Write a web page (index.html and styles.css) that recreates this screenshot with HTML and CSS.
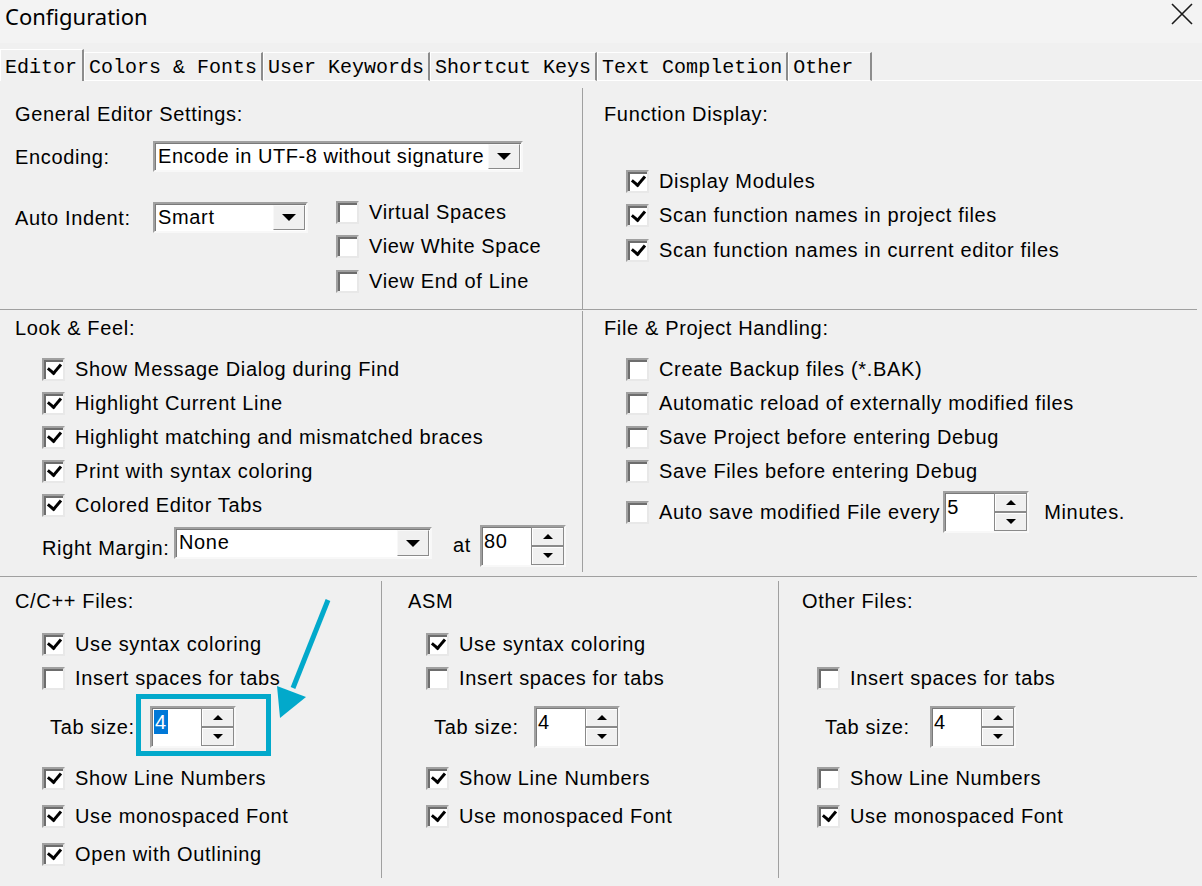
FILE: index.html
```html
<!DOCTYPE html>
<html>
<head>
<meta charset="utf-8">
<title>Configuration</title>
<link rel="stylesheet" href="styles.css">
</head>
<body>
<div class="window">
  <div class="titlebar">
    <span class="title">Configuration</span>
    <svg class="close" width="22" height="22" viewBox="0 0 22 22"><path d="M1 1 L21 21 M21 1 L1 21" stroke="#1a1a1a" stroke-width="1.6" fill="none"/></svg>
  </div>

  <div class="tabs">
    <div class="tab sel">Editor</div>
    <div class="tab">Colors &amp; Fonts</div>
    <div class="tab">User Keywords</div>
    <div class="tab">Shortcut Keys</div>
    <div class="tab">Text Completion</div>
    <div class="tab last">Other</div>
    <div class="tab-fill"></div>
  </div>

  <div class="panel">
    <!-- top section -->
    <div class="sec sec-top">
      <div class="cell cell-gen">
        <div class="heading">General Editor Settings:</div>
        <div class="enc-row">
          <span class="lbl lbl-field">Encoding:</span>
          <div class="combo combo-enc"><span class="combo-text">Encode in UTF-8 without signature</span><span class="combo-btn"><i class="tri-down"></i></span></div>
        </div>
        <div class="indent-row">
          <div class="indent-field">
            <span class="lbl lbl-field">Auto Indent:</span>
            <div class="combo combo-smart"><span class="combo-text">Smart</span><span class="combo-btn"><i class="tri-down"></i></span></div>
          </div>
          <div class="checks checks-view">
            <div class="cb cb-view"><span class="box"></span><span>Virtual Spaces</span></div>
            <div class="cb cb-view"><span class="box"></span><span>View White Space</span></div>
            <div class="cb cb-view"><span class="box"></span><span>View End of Line</span></div>
          </div>
        </div>
      </div>
      <div class="vline vline-top"></div>
      <div class="cell cell-right cell-func">
        <div class="heading">Function Display:</div>
        <div class="checks checks-func">
          <div class="cb cb-view"><span class="box on"></span><span>Display Modules</span></div>
          <div class="cb cb-view"><span class="box on"></span><span>Scan function names in project files</span></div>
          <div class="cb cb-view"><span class="box on"></span><span>Scan function names in current editor files</span></div>
        </div>
      </div>
    </div>

    <!-- middle section -->
    <div class="sec sec-mid">
      <div class="cell cell-look">
        <div class="heading">Look &amp; Feel:</div>
        <div class="checks checks-look">
          <div class="cb"><span class="box on"></span><span>Show Message Dialog during Find</span></div>
          <div class="cb"><span class="box on"></span><span>Highlight Current Line</span></div>
          <div class="cb"><span class="box on"></span><span>Highlight matching and mismatched braces</span></div>
          <div class="cb"><span class="box on"></span><span>Print with syntax coloring</span></div>
          <div class="cb"><span class="box on"></span><span>Colored Editor Tabs</span></div>
        </div>
        <div class="margin-row">
          <span class="lbl lbl-margin">Right Margin:</span>
          <div class="combo combo-margin"><span class="combo-text">None</span><span class="combo-btn"><i class="tri-down"></i></span></div>
          <span class="lbl lbl-at">at</span>
          <div class="spin"><span class="spin-val">80</span><span class="spin-btns"><span class="sb"><i class="tri-up"></i></span><span class="sb"><i class="tri-dn"></i></span></span></div>
        </div>
      </div>
      <div class="vline vline-mid"></div>
      <div class="cell cell-right cell-file">
        <div class="heading">File &amp; Project Handling:</div>
        <div class="checks checks-file">
          <div class="cb"><span class="box"></span><span>Create Backup files (*.BAK)</span></div>
          <div class="cb"><span class="box"></span><span>Automatic reload of externally modified files</span></div>
          <div class="cb"><span class="box"></span><span>Save Project before entering Debug</span></div>
          <div class="cb"><span class="box"></span><span>Save Files before entering Debug</span></div>
          <div class="cb cb-auto"><span class="box"></span><span>Auto save modified File every</span>
            <div class="spin spin-auto"><span class="spin-val">5</span><span class="spin-btns"><span class="sb"><i class="tri-up"></i></span><span class="sb"><i class="tri-dn"></i></span></span></div>
            <span class="lbl-min">Minutes.</span>
          </div>
        </div>
      </div>
    </div>

    <!-- bottom section -->
    <div class="sec sec-bot">
      <div class="cell cell-c">
        <div class="heading">C/C++ Files:</div>
        <div class="checks checks-c checks-first">
          <div class="cb"><span class="box on"></span><span>Use syntax coloring</span></div>
          <div class="cb"><span class="box"></span><span>Insert spaces for tabs</span></div>
        </div>
        <div class="tab-row tab-row-c">
          <span class="lbl lbl-tab">Tab size:</span>
          <div class="spin"><span class="spin-val"><span class="sel-text">4</span></span><span class="spin-btns"><span class="sb"><i class="tri-up"></i></span><span class="sb"><i class="tri-dn"></i></span></span></div>
        </div>
        <div class="checks checks-c">
          <div class="cb tall"><span class="box on"></span><span>Show Line Numbers</span></div>
          <div class="cb tall"><span class="box on"></span><span>Use monospaced Font</span></div>
          <div class="cb tall"><span class="box on"></span><span>Open with Outlining</span></div>
        </div>
      </div>
      <div class="vline vline-bot"></div>
      <div class="cell cell-asm">
        <div class="heading">ASM</div>
        <div class="checks checks-asm checks-first">
          <div class="cb"><span class="box on"></span><span>Use syntax coloring</span></div>
          <div class="cb"><span class="box"></span><span>Insert spaces for tabs</span></div>
        </div>
        <div class="tab-row tab-row-asm">
          <span class="lbl lbl-tab">Tab size:</span>
          <div class="spin"><span class="spin-val">4</span><span class="spin-btns"><span class="sb"><i class="tri-up"></i></span><span class="sb"><i class="tri-dn"></i></span></span></div>
        </div>
        <div class="checks checks-asm">
          <div class="cb tall"><span class="box on"></span><span>Show Line Numbers</span></div>
          <div class="cb tall"><span class="box on"></span><span>Use monospaced Font</span></div>
        </div>
      </div>
      <div class="vline vline-bot"></div>
      <div class="cell cell-other">
        <div class="heading">Other Files:</div>
        <div class="checks checks-other checks-first">
          <div class="cb cb-empty"></div>
          <div class="cb"><span class="box"></span><span>Insert spaces for tabs</span></div>
        </div>
        <div class="tab-row tab-row-other">
          <span class="lbl lbl-tab lbl-tab-other">Tab size:</span>
          <div class="spin"><span class="spin-val">4</span><span class="spin-btns"><span class="sb"><i class="tri-up"></i></span><span class="sb"><i class="tri-dn"></i></span></span></div>
        </div>
        <div class="checks checks-other">
          <div class="cb tall"><span class="box"></span><span>Show Line Numbers</span></div>
          <div class="cb tall"><span class="box on"></span><span>Use monospaced Font</span></div>
        </div>
      </div>
    </div>
  </div>

  <!-- annotation overlay -->
  <div class="highlight"></div>
  <svg class="arrow" width="1202" height="886" viewBox="0 0 1202 886">
    <line x1="328" y1="600" x2="293" y2="688" stroke="#02a9cb" stroke-width="5"/>
    <polygon points="277,686 306,697 280,718" fill="#02a9cb"/>
  </svg>
</div>
</body>
</html>
```

FILE: styles.css
```css
* { box-sizing: border-box; }
html, body { margin: 0; padding: 0; }
body {
  width: 1202px;
  height: 886px;
  overflow: hidden;
  background: #f0f0f0;
  font-family: "Liberation Sans", Arial, sans-serif;
  font-size: 20px;
  letter-spacing: 0.65px;
  color: #000;
}
.window { position: relative; width: 1202px; height: 886px; }

/* title bar */
.titlebar {
  height: 43px;
  background: #f3f3f3;
  display: flex;
  align-items: flex-start;
  justify-content: space-between;
  padding: 0 9px 0 5px;
}
.title {
  font-family: "Noto Sans", "Open Sans", sans-serif;
  font-size: 22px;
  letter-spacing: 0;
  line-height: 32px;
}
.close { margin-top: 3px; }

/* tabs */
.tabs {
  display: flex;
  height: 32px;
  margin-top: 6px;
  font-family: "Liberation Mono", "DejaVu Sans Mono", monospace;
  font-size: 20px;
  letter-spacing: 0;
}
.tab {
  display: flex;
  align-items: center;
  margin-top: 3px;
  padding: 2px 4px 0 4px;
  border-top: 1px solid #fff;
  border-left: 1px solid #fff;
  border-right: 2px solid #8c8c8c;
  border-bottom: 1px solid #fff;
  white-space: nowrap;
}
.tab.sel {
  margin-top: 0;
  border-bottom: none;
  padding-top: 3px;
  padding-right: 5px;
}
.tab.last { padding-right: 17px; }
.tab-fill { flex: 1; border-bottom: 1px solid #fff; }

/* sections */
.sec {
  display: grid;
  border-bottom: 1px solid #a0a0a0;
  margin-right: 5px;
}
.sec-top { grid-template-columns: 582px 1px 1fr; height: 229px; }
.sec-mid { grid-template-columns: 582px 1px 1fr; height: 267px; }
.sec-bot { grid-template-columns: 381px 1px 396px 1px 1fr; height: 309px; border-bottom: none; }
.vline { background: #a0a0a0; }
.vline-top { margin-top: 7px; }
.vline-mid { margin: 1px 0 4px; }
.vline-bot { margin: 4px 0 8px; }

.heading { line-height: 22px; height: 22px; white-space: nowrap; }
.lbl { white-space: nowrap; line-height: 22px; }

/* checkbox rows */
.checks { display: flex; flex-direction: column; }
.cb {
  display: flex;
  align-items: center;
  gap: 10px;
  height: 34px;
  white-space: nowrap;
}
.cb-view { height: 34.5px; }
.cb.tall { height: 38px; }
.box {
  flex: none;
  width: 23px;
  height: 23px;
  background: #fff;
  border: 2px solid;
  border-color: #a0a0a0 #e8e8e8 #e8e8e8 #a0a0a0;
  box-shadow: inset 2px 2px 0 #6d6d6d;
  display: flex;
  align-items: center;
  justify-content: center;
}
.box.on::after {
  content: "";
  width: 6px;
  height: 10px;
  border: solid #000;
  border-width: 0 3px 3px 0;
  transform: rotate(40deg);
  margin: -3px 0 0 2px;
}

/* combo boxes */
.combo {
  display: flex;
  background: #fff;
  border: 2px solid;
  border-color: #a0a0a0 #f8f8f8 #f8f8f8 #a0a0a0;
  box-shadow: inset 1px 1px 0 #7a7a7a;
  height: 31px;
}
.combo-text {
  flex: 1;
  padding-left: 3px;
  line-height: 27px;
  white-space: nowrap;
  overflow: hidden;
}
.combo-enc .combo-text { letter-spacing: 0.55px; }
.combo-btn {
  flex: none;
  width: 32px;
  margin: 1px 1px 1px 0;
  background: #f0f0f0;
  border: 1px solid;
  border-color: #f8f8f8 #8a8a8a #8a8a8a #f8f8f8;
  display: flex;
  align-items: center;
  justify-content: center;
}
.tri-down {
  width: 0; height: 0;
  border-left: 7px solid transparent;
  border-right: 7px solid transparent;
  border-top: 7px solid #000;
}
.tri-up, .tri-dn { width: 0; height: 0; border-left: 5px solid transparent; border-right: 5px solid transparent; }
.tri-up { border-bottom: 5px solid #000; }
.tri-dn { border-top: 5px solid #000; }

/* spin boxes */
.spin {
  flex: none;
  display: flex;
  width: 86px;
  height: 42px;
  background: #fff;
  border: 2px solid;
  border-color: #a0a0a0 #f8f8f8 #f8f8f8 #a0a0a0;
  box-shadow: inset 1px 1px 0 #7a7a7a;
}
.spin-val { flex: 1; padding: 2px 0 0 2px; line-height: 24px; }
.spin-btns { flex: none; width: 33px; display: flex; flex-direction: column; }
.sb {
  flex: 1;
  background: #f0f0f0;
  border: 1px solid #8a8a8a;
  box-shadow: inset 1px 1px 0 #fff;
  display: flex;
  align-items: center;
  justify-content: center;
}
.sel-text { background: #0078d7; color: #fff; padding: 0 1px; display: inline-block; line-height: 24px; }

/* top-left */
.cell-gen { padding: 22px 0 0 15px; }
.enc-row { display: flex; align-items: center; margin-top: 16px; height: 31px; }
.lbl-field { width: 138px; }
.combo-enc { width: 370px; }
.indent-row { display: flex; align-items: flex-start; margin-top: 23px; }
.indent-field { display: flex; align-items: center; margin-top: 7px; height: 31px; }
.combo-smart { width: 155px; }
.checks-view { margin-left: 28px; }

/* right cells */
.cell-right { padding: 22px 0 0 21px; }
.cell-func .checks-func { margin: 39px 0 0 22px; }
.cell-file { padding-top: 7px; }
.checks-file { margin: 13px 0 0 22px; }
.cb-auto { height: 42px; margin-top: 3px; gap: 0; }
.cb-auto .box { margin-right: 10px; }
.spin-auto { margin-left: 3px; }
.lbl-min { margin-left: 15px; }

/* middle-left */
.cell-look { padding: 7px 0 0 15px; }
.checks-look { margin: 13px 0 0 27px; }
.margin-row { display: flex; align-items: flex-start; margin: 3px 0 0 27px; height: 42px; }
.lbl-margin { width: 132px; margin-top: 12px; }
.combo-margin { width: 258px; margin-top: 2px; height: 32px; }
.lbl-at { margin: 9px 0 0 21px; width: 27px; }

/* bottom */
.cell-c { padding: 13px 0 0 15px; }
.cell-asm { padding: 13px 0 0 26px; }
.cell-other { padding: 13px 0 0 23px; }
.checks-c { margin-left: 27px; }
.checks-asm { margin-left: 18px; }
.checks-other { margin-left: 15px; }
.checks-first { margin-top: 15px; }
.tab-row { display: flex; align-items: center; height: 42px; margin-top: 11px; }
.tab-row + .checks { margin-top: 11px; }
.tab-row-c { margin-left: 35px; }
.tab-row-asm { margin-left: 26px; }
.tab-row-other { margin-left: 23px; }
.lbl-tab { width: 100px; }
.lbl-tab-other { width: 105px; }

/* annotation overlay */
.highlight {
  position: absolute;
  left: 136px;
  top: 694px;
  width: 135px;
  height: 62px;
  border: 5px solid #02a9cb;
}
.arrow { position: absolute; left: 0; top: 0; pointer-events: none; }
```
